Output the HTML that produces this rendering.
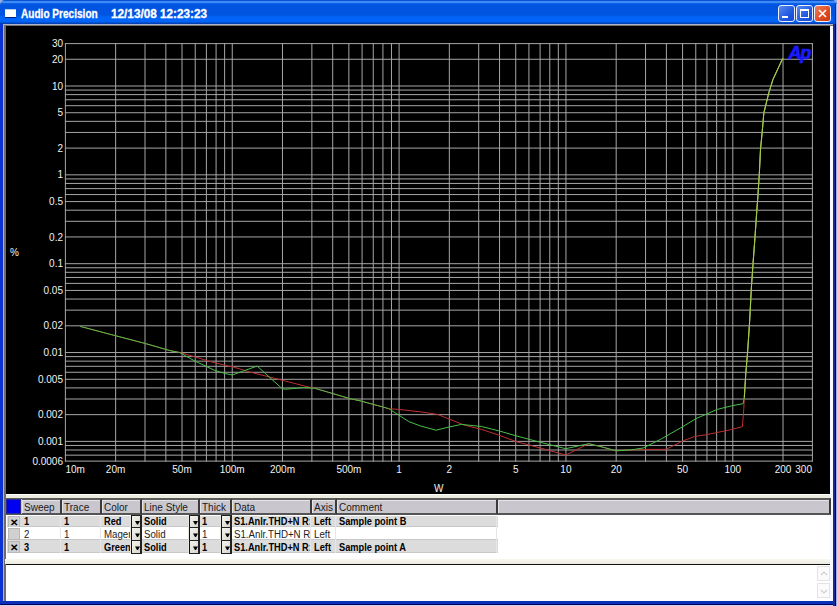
<!DOCTYPE html>
<html><head><meta charset="utf-8"><style>
*{margin:0;padding:0;box-sizing:border-box}
html,body{width:837px;height:606px;overflow:hidden;background:#9ab0e0;font-family:"Liberation Sans",sans-serif}
.abs{position:absolute}
#title{position:absolute;left:0;top:0;width:837px;height:24px;
background:linear-gradient(#0a50d0 0px,#0a50d0 1px,#3c8cf8 1px,#3c8cf8 3px,#1262e8 3px,#0054e0 5px,#0054e0 15px,#0064f8 17px,#0064f8 22px,#0042b4 23px,#0042b4 24px);
border-radius:5px 5px 0 0}
#ttl{position:absolute;left:20.5px;top:6px;color:#fff;font-weight:bold;font-size:12px;line-height:16px;transform:scaleX(0.84);transform-origin:0 0;white-space:nowrap;-webkit-text-stroke:0.3px #fff}
#date{position:absolute;left:110.5px;top:6px;color:#fff;font-weight:bold;font-size:12px;line-height:16px;transform:scaleX(0.98);transform-origin:0 0;white-space:nowrap;-webkit-text-stroke:0.3px #fff}
.tb{position:absolute;top:5px;width:17px;height:17px;border:1px solid #e8f0ff;border-radius:3px;background:linear-gradient(135deg,#5a8cf0,#2058e0 60%,#1848d0)}
.hc{position:absolute;top:0;height:17px;background:#c9c7cd;border-top:2px solid #5a5a58;border-bottom:2px solid #555;border-right:2px solid #3a3a3a;box-shadow:inset 1px 1px 0 #e4e4e8;font-size:10px;color:#1a1a1a;padding-left:2px;line-height:15px;white-space:nowrap;overflow:hidden}
.row{position:absolute;left:7px;width:491px;font-size:10px;border-bottom:1px solid #c8c8c8}
.cell{position:absolute;top:0;padding-left:2px;white-space:nowrap;overflow:hidden;border-right:1px solid #e6e6e6}
.cell span{display:inline-block;transform:scaleX(0.97);transform-origin:0 0}
.b .cell span{transform:scaleX(0.925)}
.chk{position:absolute;left:1px;width:12px;height:12px;background:#d0d0d0;border:1px solid #b8b8b8;font-size:10px;line-height:11px;text-align:center;font-weight:bold;color:#000}
.dd{position:absolute;top:0;width:11px;background:linear-gradient(135deg,#f4f4ee,#d6d6ce);border-left:1px solid #111;border-right:2px solid #222;border-top:1px solid #222}
.dd i{position:absolute;left:3px;bottom:2px;width:0;height:0;border-left:2.5px solid transparent;border-right:2.5px solid transparent;border-top:3.5px solid #000}
</style></head><body>
<div class="abs" style="left:0;top:20px;width:3px;height:586px;background:#0a32d4"></div><div id="title"></div>
<div class="abs" style="left:5px;top:9px;width:11px;height:1px;background:#b8c8e8"></div>
<div class="abs" style="left:5px;top:10px;width:11px;height:7px;background:#fffef8"></div>
<div class="abs" style="left:5px;top:17px;width:11px;height:1px;background:#002080"></div>
<div id="ttl">Audio Precision</div>
<div id="date">12/13/08 12:23:23</div>
<div class="tb" style="left:778px"><div class="abs" style="left:3px;top:10px;width:6px;height:2px;background:#fff"></div></div>
<div class="tb" style="left:796px"><div class="abs" style="left:3px;top:3px;width:9px;height:9px;border:1px solid #fff;border-top-width:2px"></div></div>
<div class="tb" style="left:814px;background:linear-gradient(135deg,#f08060,#e04a20 60%,#c83810)"><svg class="abs" style="left:0;top:0" width="15" height="15"><path d="M4 4L11 11M11 4L4 11" stroke="#fff" stroke-width="1.6"/></svg></div>
<!-- frame -->
<div class="abs" style="left:3px;top:24px;width:830px;height:1px;background:#a8b4d0"></div>
<div class="abs" style="left:3px;top:25px;width:830px;height:1px;background:#7a7068"></div>
<div class="abs" style="left:3px;top:24px;width:1px;height:578px;background:#a0b8f0"></div>
<div class="abs" style="left:4px;top:26px;width:2px;height:575px;background:#6c6c6c"></div>
<div class="abs" style="left:830px;top:26px;width:3px;height:575px;background:#f4f8ff"></div>
<div class="abs" style="left:6px;top:494px;width:824px;height:107px;background:#fff"></div>
<svg width="824" height="468" viewBox="6 26 824 468" style="position:absolute;left:6px;top:26px">
<rect x="6" y="26" width="824" height="468" fill="#000"/>
<g stroke="#a6a6a6" stroke-width="1" fill="none"><line x1="65.40" y1="43.1" x2="65.40" y2="461.6"/><line x1="115.63" y1="43.1" x2="115.63" y2="461.6"/><line x1="145.01" y1="43.1" x2="145.01" y2="461.6"/><line x1="165.85" y1="43.1" x2="165.85" y2="461.6"/><line x1="182.02" y1="43.1" x2="182.02" y2="461.6"/><line x1="195.23" y1="43.1" x2="195.23" y2="461.6"/><line x1="206.40" y1="43.1" x2="206.40" y2="461.6"/><line x1="216.08" y1="43.1" x2="216.08" y2="461.6"/><line x1="224.62" y1="43.1" x2="224.62" y2="461.6"/><line x1="232.25" y1="43.1" x2="232.25" y2="461.6"/><line x1="282.48" y1="43.1" x2="282.48" y2="461.6"/><line x1="311.86" y1="43.1" x2="311.86" y2="461.6"/><line x1="332.70" y1="43.1" x2="332.70" y2="461.6"/><line x1="348.87" y1="43.1" x2="348.87" y2="461.6"/><line x1="362.08" y1="43.1" x2="362.08" y2="461.6"/><line x1="373.25" y1="43.1" x2="373.25" y2="461.6"/><line x1="382.93" y1="43.1" x2="382.93" y2="461.6"/><line x1="391.47" y1="43.1" x2="391.47" y2="461.6"/><line x1="399.10" y1="43.1" x2="399.10" y2="461.6"/><line x1="449.33" y1="43.1" x2="449.33" y2="461.6"/><line x1="478.71" y1="43.1" x2="478.71" y2="461.6"/><line x1="499.55" y1="43.1" x2="499.55" y2="461.6"/><line x1="515.72" y1="43.1" x2="515.72" y2="461.6"/><line x1="528.93" y1="43.1" x2="528.93" y2="461.6"/><line x1="540.10" y1="43.1" x2="540.10" y2="461.6"/><line x1="549.78" y1="43.1" x2="549.78" y2="461.6"/><line x1="558.32" y1="43.1" x2="558.32" y2="461.6"/><line x1="565.95" y1="43.1" x2="565.95" y2="461.6"/><line x1="616.18" y1="43.1" x2="616.18" y2="461.6"/><line x1="645.56" y1="43.1" x2="645.56" y2="461.6"/><line x1="666.40" y1="43.1" x2="666.40" y2="461.6"/><line x1="682.57" y1="43.1" x2="682.57" y2="461.6"/><line x1="695.78" y1="43.1" x2="695.78" y2="461.6"/><line x1="706.95" y1="43.1" x2="706.95" y2="461.6"/><line x1="716.63" y1="43.1" x2="716.63" y2="461.6"/><line x1="725.17" y1="43.1" x2="725.17" y2="461.6"/><line x1="732.80" y1="43.1" x2="732.80" y2="461.6"/><line x1="783.03" y1="43.1" x2="783.03" y2="461.6"/><line x1="812.41" y1="43.1" x2="812.41" y2="461.6"/><line x1="64.9" y1="461.10" x2="812.9" y2="461.10"/><line x1="64.9" y1="455.16" x2="812.9" y2="455.16"/><line x1="64.9" y1="450.00" x2="812.9" y2="450.00"/><line x1="64.9" y1="445.46" x2="812.9" y2="445.46"/><line x1="64.9" y1="441.39" x2="812.9" y2="441.39"/><line x1="64.9" y1="414.65" x2="812.9" y2="414.65"/><line x1="64.9" y1="399.00" x2="812.9" y2="399.00"/><line x1="64.9" y1="387.90" x2="812.9" y2="387.90"/><line x1="64.9" y1="379.29" x2="812.9" y2="379.29"/><line x1="64.9" y1="372.25" x2="812.9" y2="372.25"/><line x1="64.9" y1="366.31" x2="812.9" y2="366.31"/><line x1="64.9" y1="361.15" x2="812.9" y2="361.15"/><line x1="64.9" y1="356.61" x2="812.9" y2="356.61"/><line x1="64.9" y1="352.54" x2="812.9" y2="352.54"/><line x1="64.9" y1="325.80" x2="812.9" y2="325.80"/><line x1="64.9" y1="310.15" x2="812.9" y2="310.15"/><line x1="64.9" y1="299.05" x2="812.9" y2="299.05"/><line x1="64.9" y1="290.44" x2="812.9" y2="290.44"/><line x1="64.9" y1="283.40" x2="812.9" y2="283.40"/><line x1="64.9" y1="277.46" x2="812.9" y2="277.46"/><line x1="64.9" y1="272.30" x2="812.9" y2="272.30"/><line x1="64.9" y1="267.76" x2="812.9" y2="267.76"/><line x1="64.9" y1="263.69" x2="812.9" y2="263.69"/><line x1="64.9" y1="236.95" x2="812.9" y2="236.95"/><line x1="64.9" y1="221.30" x2="812.9" y2="221.30"/><line x1="64.9" y1="210.20" x2="812.9" y2="210.20"/><line x1="64.9" y1="201.59" x2="812.9" y2="201.59"/><line x1="64.9" y1="194.55" x2="812.9" y2="194.55"/><line x1="64.9" y1="188.61" x2="812.9" y2="188.61"/><line x1="64.9" y1="183.45" x2="812.9" y2="183.45"/><line x1="64.9" y1="178.91" x2="812.9" y2="178.91"/><line x1="64.9" y1="174.84" x2="812.9" y2="174.84"/><line x1="64.9" y1="148.10" x2="812.9" y2="148.10"/><line x1="64.9" y1="132.45" x2="812.9" y2="132.45"/><line x1="64.9" y1="121.35" x2="812.9" y2="121.35"/><line x1="64.9" y1="112.74" x2="812.9" y2="112.74"/><line x1="64.9" y1="105.70" x2="812.9" y2="105.70"/><line x1="64.9" y1="99.76" x2="812.9" y2="99.76"/><line x1="64.9" y1="94.60" x2="812.9" y2="94.60"/><line x1="64.9" y1="90.06" x2="812.9" y2="90.06"/><line x1="64.9" y1="85.99" x2="812.9" y2="85.99"/><line x1="64.9" y1="59.25" x2="812.9" y2="59.25"/><line x1="64.9" y1="43.60" x2="812.9" y2="43.60"/></g>
<text x="788.5" y="58.5" fill="#1a1aff" font-family="Liberation Sans" font-weight="bold" font-style="italic" font-size="18" letter-spacing="-1.3" stroke="#1a1aff" stroke-width="0.7">Ap</text>
<polyline points="80.2,326.4 115.4,335.7 145.3,343.5 170.0,350.6 179.7,352.5 194.6,356.7 207.8,360.9 225.1,365.3 234.0,367.2 250.0,372.1 273.9,378.1 306.0,386.4 314.5,388.2 349.2,398.4 361.5,401.2 383.0,407.0 388.7,408.7 398.8,409.4 420.3,411.8 437.5,414.4 450.0,419.4 464.3,425.1 481.5,429.4 498.7,435.1 516.0,441.6 540.3,448.0 565.7,455.1 585.8,445.1 588.7,443.7 603.0,447.2 616.0,450.8 644.6,449.4 666.0,449.4 682.9,440.9 694.4,436.6 707.3,434.5 731.6,429.5 742.4,426.6 743.8,408.7 744.3,397.7 745.7,374.8 747.6,352.0 749.5,323.5 751.4,287.5 753.1,262.7 754.7,241.3 756.4,216.5 757.7,199.0 759.3,174.1 760.5,149.4 762.1,133.0 763.8,113.2 768.8,92.8 772.9,79.6 782.8,58.2" fill="none" stroke="#c03030" stroke-width="1"/>
<polyline points="80.2,326.4 115.4,335.7 145.3,343.5 170.0,350.6 179.7,352.5 194.6,360.9 215.0,370.5 225.1,373.5 232.3,375.0 242.4,371.3 257.2,366.1 282.3,388.8 285.8,389.2 303.8,387.6 314.5,388.2 349.2,398.4 361.5,401.2 383.0,407.0 388.7,408.7 398.8,415.1 408.8,421.6 420.3,425.9 436.0,430.2 449.0,427.0 461.5,424.4 481.5,426.5 498.7,430.8 516.0,435.8 540.3,442.3 565.7,448.7 588.7,443.7 603.0,447.2 616.0,450.8 631.7,449.8 643.2,448.0 660.4,439.4 682.9,426.6 695.8,418.7 705.8,414.4 717.3,409.4 731.6,405.8 743.1,403.7 744.3,397.7 745.7,374.8 747.6,352.0 749.5,323.5 751.4,287.5 753.1,262.7 754.7,241.3 756.4,216.5 757.7,199.0 759.3,174.1 760.5,149.4 762.1,133.0 763.8,113.2 768.8,92.8 772.9,79.6 782.8,58.2" fill="none" stroke="#48c048" stroke-width="1"/>
<polyline points="744.3,397.7 745.7,374.8 747.6,352.0 749.5,323.5 751.4,287.5 753.1,262.7 754.7,241.3 756.4,216.5 757.7,199.0 759.3,174.1 760.5,149.4 762.1,133.0 763.8,113.2 768.8,92.8 772.9,79.6 782.8,58.2" fill="none" stroke="#a8c848" stroke-width="1.1"/>
<g fill="#f2f2f2" font-family="Liberation Sans" font-size="10"><text x="63" y="47.2" text-anchor="end">30</text><text x="63" y="62.8" text-anchor="end">20</text><text x="63" y="89.6" text-anchor="end">10</text><text x="63" y="116.3" text-anchor="end">5</text><text x="63" y="151.7" text-anchor="end">2</text><text x="63" y="178.4" text-anchor="end">1</text><text x="63" y="205.2" text-anchor="end">0.5</text><text x="63" y="240.5" text-anchor="end">0.2</text><text x="63" y="267.3" text-anchor="end">0.1</text><text x="63" y="294.0" text-anchor="end">0.05</text><text x="63" y="329.4" text-anchor="end">0.02</text><text x="63" y="356.1" text-anchor="end">0.01</text><text x="63" y="382.9" text-anchor="end">0.005</text><text x="63" y="418.2" text-anchor="end">0.002</text><text x="63" y="445.0" text-anchor="end">0.001</text><text x="63" y="464.7" text-anchor="end">0.0006</text><text x="65.5" y="472.8" text-anchor="start">10m</text><text x="115.6" y="472.8" text-anchor="middle">20m</text><text x="182.0" y="472.8" text-anchor="middle">50m</text><text x="232.2" y="472.8" text-anchor="middle">100m</text><text x="282.5" y="472.8" text-anchor="middle">200m</text><text x="348.9" y="472.8" text-anchor="middle">500m</text><text x="399.1" y="472.8" text-anchor="middle">1</text><text x="449.3" y="472.8" text-anchor="middle">2</text><text x="515.7" y="472.8" text-anchor="middle">5</text><text x="565.9" y="472.8" text-anchor="middle">10</text><text x="616.2" y="472.8" text-anchor="middle">20</text><text x="682.6" y="472.8" text-anchor="middle">50</text><text x="732.8" y="472.8" text-anchor="middle">100</text><text x="783.0" y="472.8" text-anchor="middle">200</text><text x="812.0" y="472.8" text-anchor="end">300</text>
<text x="10" y="256">%</text><text x="434" y="492">W</text></g>
</svg>
<!-- table area -->
<div class="abs" style="left:6px;top:495px;width:824px;height:3px;background:#ecebe0"></div>
<div class="abs" style="left:6px;top:498px;width:16px;height:17px;background:#c9c7cd;border-top:1px solid #5a5a58;border-bottom:1px solid #555"><div class="abs" style="left:0;top:0;width:15px;height:15px;background:#0000f0;border:1px solid #2a2a90"></div></div>
<div class="abs" style="left:0;top:498px"><div class="hc" style="left:22px;width:40px">Sweep</div><div class="hc" style="left:62px;width:40px">Trace</div><div class="hc" style="left:102px;width:40px">Color</div><div class="hc" style="left:142px;width:58px">Line Style</div><div class="hc" style="left:200px;width:32px">Thick</div><div class="hc" style="left:232px;width:80px">Data</div><div class="hc" style="left:312px;width:25px">Axis</div><div class="hc" style="left:337px;width:161px">Comment</div><div class="hc" style="left:498px;width:333px"></div></div>
<div class="row b" style="top:516px;height:11px;background:#dcdcdc;font-weight:bold;color:#000"><div class="chk" style="top:0px">&#x2715;</div><div class="cell" style="left:15px;width:39px;height:11px;line-height:12px"><span>1</span></div><div class="cell" style="left:55px;width:39px;height:11px;line-height:12px"><span>1</span></div><div class="cell" style="left:95px;width:29px;height:11px;line-height:12px"><span>Red</span></div><div class="dd" style="left:124px;height:12px;top:-1px"><svg width="9" height="13" style="position:absolute;left:0;top:0"><path d="M3 5H8L6 8.5H5Z" fill="#000"/></svg></div><div class="cell" style="left:135px;width:47px;height:11px;line-height:12px"><span>Solid</span></div><div class="dd" style="left:182px;height:12px;top:-1px"><svg width="9" height="13" style="position:absolute;left:0;top:0"><path d="M3 5H8L6 8.5H5Z" fill="#000"/></svg></div><div class="cell" style="left:193px;width:21px;height:11px;line-height:12px"><span>1</span></div><div class="dd" style="left:214px;height:12px;top:-1px"><svg width="9" height="13" style="position:absolute;left:0;top:0"><path d="M3 5H8L6 8.5H5Z" fill="#000"/></svg></div><div class="cell" style="left:225px;width:79px;height:11px;line-height:12px"><span>S1.Anlr.THD+N R:</span></div><div class="cell" style="left:305px;width:24px;height:11px;line-height:12px"><span>Left</span></div><div class="cell" style="left:330px;width:160px;height:11px;line-height:12px"><span>Sample point B</span></div></div><div class="row" style="top:527px;height:13px;background:#ffffff;font-weight:normal;color:#222"><div class="chk" style="top:1px"></div><div class="cell" style="left:15px;width:39px;height:13px;line-height:16px"><span>2</span></div><div class="cell" style="left:55px;width:39px;height:13px;line-height:16px"><span>1</span></div><div class="cell" style="left:95px;width:29px;height:13px;line-height:16px"><span>Magenta</span></div><div class="dd" style="left:124px;height:14px;top:0px"><svg width="9" height="13" style="position:absolute;left:0;top:0"><path d="M3 5.5H8L6 9H5Z" fill="#000"/></svg></div><div class="cell" style="left:135px;width:47px;height:13px;line-height:16px"><span>Solid</span></div><div class="dd" style="left:182px;height:14px;top:0px"><svg width="9" height="13" style="position:absolute;left:0;top:0"><path d="M3 5.5H8L6 9H5Z" fill="#000"/></svg></div><div class="cell" style="left:193px;width:21px;height:13px;line-height:16px"><span>1</span></div><div class="dd" style="left:214px;height:14px;top:0px"><svg width="9" height="13" style="position:absolute;left:0;top:0"><path d="M3 5.5H8L6 9H5Z" fill="#000"/></svg></div><div class="cell" style="left:225px;width:79px;height:13px;line-height:16px"><span>S1.Anlr.THD+N R:</span></div><div class="cell" style="left:305px;width:24px;height:13px;line-height:16px"><span>Left</span></div><div class="cell" style="left:330px;width:160px;height:13px;line-height:16px"><span></span></div></div><div class="row b" style="top:540px;height:13px;background:#dcdcdc;font-weight:bold;color:#000"><div class="chk" style="top:1px">&#x2715;</div><div class="cell" style="left:15px;width:39px;height:13px;line-height:16px"><span>3</span></div><div class="cell" style="left:55px;width:39px;height:13px;line-height:16px"><span>1</span></div><div class="cell" style="left:95px;width:29px;height:13px;line-height:16px"><span>Green</span></div><div class="dd" style="left:124px;height:14px;border-bottom:1px solid #222;top:0px"><svg width="9" height="13" style="position:absolute;left:0;top:0"><path d="M3 5.5H8L6 9H5Z" fill="#000"/></svg></div><div class="cell" style="left:135px;width:47px;height:13px;line-height:16px"><span>Solid</span></div><div class="dd" style="left:182px;height:14px;border-bottom:1px solid #222;top:0px"><svg width="9" height="13" style="position:absolute;left:0;top:0"><path d="M3 5.5H8L6 9H5Z" fill="#000"/></svg></div><div class="cell" style="left:193px;width:21px;height:13px;line-height:16px"><span>1</span></div><div class="dd" style="left:214px;height:14px;border-bottom:1px solid #222;top:0px"><svg width="9" height="13" style="position:absolute;left:0;top:0"><path d="M3 5.5H8L6 9H5Z" fill="#000"/></svg></div><div class="cell" style="left:225px;width:79px;height:13px;line-height:16px"><span>S1.Anlr.THD+N R:</span></div><div class="cell" style="left:305px;width:24px;height:13px;line-height:16px"><span>Left</span></div><div class="cell" style="left:330px;width:160px;height:13px;line-height:16px"><span>Sample point A</span></div></div>
<div class="abs" style="left:5px;top:559px;width:825px;height:5px;background:linear-gradient(#f8f8f2,#ecebe0)"></div>
<div class="abs" style="left:6px;top:564px;width:824px;height:1px;background:#111"></div>
<div class="abs" style="left:817px;top:566px;width:13px;height:15px;border:1px solid #e4e4e4;background:#fbfbfb"><svg class="abs" style="left:0;top:0" width="12" height="14"><path d="M3 8L6 5L9 8" stroke="#d0d0d0" stroke-width="1.2" fill="none"/></svg></div>
<div class="abs" style="left:817px;top:583px;width:13px;height:15px;border:1px solid #e4e4e4;background:#fbfbfb"><svg class="abs" style="left:0;top:0" width="12" height="14"><path d="M3 6L6 9L9 6" stroke="#d0d0d0" stroke-width="1.2" fill="none"/></svg></div>
<div class="abs" style="left:0;top:601px;width:837px;height:5px;background:linear-gradient(#0a30b8 0,#0a30b8 3px,#000060 3px,#000060 4px,#d0d0f0 4px)"></div>
<div class="abs" style="left:833px;top:4px;width:4px;height:20px;background:linear-gradient(90deg,#0a50e0 0,#0a50e0 2px,#0030b0 2px,#0030b0 3px,#a0b8f0 3px)"></div>
<div class="abs" style="left:833px;top:24px;width:4px;height:582px;background:linear-gradient(90deg,#1a2a90 0,#1a2a90 2.5px,#000070 2.5px,#000070 3.5px,#a0b0e0 3.5px)"></div>
</body></html>
